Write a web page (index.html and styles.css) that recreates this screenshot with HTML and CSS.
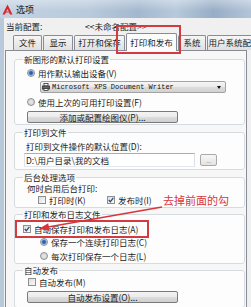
FILE: index.html
```html
<!DOCTYPE html>
<html lang="zh-CN">
<head>
    <meta charset="UTF-8">
    <meta name="viewport" content="width=device-width, initial-scale=1.0">
    <title>选项</title>
    <link rel="stylesheet" href="styles.css">
</head>
<body>
<div class="window">
    <div class="titlebar">
        <svg class="app-icon" width="11" height="11" viewBox="0 0 11 11">
            <path d="M0.5 10.5 L5.5 0.5 L10.5 10.5 L8 10.5 L5.5 5 L3 10.5 Z" fill="#d8262b"/>
            <path d="M4 8.6 L7 8.6 L6.5 7.4 L4.5 7.4 Z" fill="#d8262b"/>
        </svg>
        <span class="title">选项</span>
    </div>

    <div class="frame">
        <div class="profile">
            <span class="profile-label">当前配置:</span>
            <span class="profile-name">&lt;&lt;未命名配置&gt;&gt;</span>
        </div>

        <div class="tabs">
            <div class="tab t-file">文件</div>
            <div class="tab t-show">显示</div>
            <div class="tab t-open">打开和保存</div>
            <div class="tab t-plot active">打印和发布</div>
            <div class="tab t-sys">系统</div>
            <div class="tab t-user">用户系统配置</div>
        </div>

        <div class="panel">
            <fieldset class="group g-default">
                <legend>新图形的默认打印设置</legend>
                <div class="row radio-row first"><span class="radio on"></span>用作默认输出设备(V)</div>
                <div class="combo">
                    <svg class="printer" width="8" height="8" viewBox="0 0 8 8">
                        <rect x="2" y="0.5" width="4" height="2.5" fill="#fff" stroke="#333" stroke-width="0.8"/>
                        <rect x="0.5" y="3" width="7" height="3" fill="#666" stroke="#333" stroke-width="0.8"/>
                        <rect x="2" y="5.5" width="4" height="2" fill="#fff" stroke="#333" stroke-width="0.8"/>
                    </svg>
                    <span class="combo-text">Microsoft XPS Document Writer</span>
                    <span class="combo-arrow"></span>
                </div>
                <div class="row radio-row">
                    <span class="radio"></span>使用上次的可用打印设置(F)
                </div>
                <div class="btn wide">添加或配置绘图仪(P)...</div>
            </fieldset>

            <fieldset class="group g-file">
                <legend>打印到文件</legend>
                <div class="row file-label">打印到文件操作的默认位置(D):</div>
                <div class="file-row">
                    <div class="path">D:\用户目录\我的文档</div>
                    <div class="dots">....</div>
                </div>
            </fieldset>

            <fieldset class="group g-back">
                <legend>后台处理选项</legend>
                <div class="row when">何时启用后台打印:</div>
                <div class="row checks">
                    <span class="opt opt-plot"><span class="check"></span>打印时(K)</span>
                    <span class="opt opt-pub"><span class="check on"><svg width="6" height="6" viewBox="0 0 6 6"><path d="M0.8 3 L2.4 4.8 L5.3 0.9" stroke="#2f4677" stroke-width="1.3" fill="none"/></svg></span>发布时(I)</span>
                    <span class="callout">去掉前面的勾</span>
                </div>
            </fieldset>

            <fieldset class="group g-log">
                <legend>打印和发布日志文件</legend>
                <div class="row autosave"><span class="check on"><svg width="6" height="6" viewBox="0 0 6 6"><path d="M0.8 3 L2.4 4.8 L5.3 0.9" stroke="#2f4677" stroke-width="1.3" fill="none"/></svg></span>自动保存打印和发布日志(A)</div>
                <div class="row radio-row log-one"><span class="radio on"></span>保存一个连续打印日志(C)</div>
                <div class="row radio-row log-each"><span class="radio"></span>每次打印保存一个日志(L)</div>
            </fieldset>

            <fieldset class="group g-auto">
                <legend>自动发布</legend>
                <div class="row autopub"><span class="check"></span>自动发布(M)</div>
                <div class="btn wide">自动发布设置(O)...</div>
            </fieldset>
        </div>
    </div>

    <!-- annotations drawn over the screenshot -->
    <div class="mark mark-tab"></div>
    <div class="mark mark-log"></div>
    <svg class="arrow" width="251" height="307" viewBox="0 0 251 307">
        <line x1="162" y1="207" x2="48" y2="227" stroke="#d8353b" stroke-width="1.6"/>
        <polygon points="39,228.8 49.5,231 48.2,223.2" fill="#d8353b"/>
    </svg>
</div>
</body>
</html>
```

FILE: styles.css
```css
body {
    margin: 0;
    font-family: "Noto Sans CJK SC", "Noto Sans", sans-serif;
}
.window {
    position: relative;
    width: 251px;
    height: 307px;
    overflow: hidden;
    background: #f0f0f0;
    font-size: 8.5px;
    color: #1b1b1b;
}
.titlebar {
    height: 18px;
    display: flex;
    align-items: center;
    padding-left: 2px;
    background:
        linear-gradient(180deg, rgba(255,255,255,0.35), rgba(255,255,255,0) 60%),
        linear-gradient(90deg, #c2d2e3 0%, #b9cadc 35%, #a3b8cf 55%, #b7c9db 70%, #97adc6 85%, #b2c4d8 100%);
}
.app-icon {
    margin-right: 3px;
}
.title {
    font-size: 9px;
    color: #111;
}
.frame {
    border-left: 4px solid #b8c9db;
}
.profile {
    display: flex;
    height: 17px;
    line-height: 17px;
    padding-left: 2px;
}
.profile-label {
    width: 79px;
}

/* tabs */
.tabs {
    display: flex;
    align-items: flex-end;
    gap: 1px;
    height: 15px;
    padding-left: 9px;
}
.tab {
    box-sizing: border-box;
    height: 15px;
    line-height: 13px;
    text-align: center;
    white-space: nowrap;
    border: 1px solid #898c95;
    border-bottom: none;
    border-radius: 2px 2px 0 0;
    background: linear-gradient(#f6f6f6, #e0e0e0);
    flex-shrink: 0;
}
.t-file { width: 29px; }
.t-show { width: 30px; }
.t-open { width: 51px; }
.t-plot { width: 51px; }
.t-sys { width: 28px; }
.t-user { width: 54px; }
.tab.active {
    position: relative;
    z-index: 1;
    height: 18px;
    line-height: 16px;
    margin-bottom: -1px;
    background: #fcfcfc;
}

/* page */
.panel {
    box-sizing: border-box;
    width: 242px;
    height: 262px;
    margin-left: 1px;
    border: 1px solid #898c95;
    background: #f7f7f7;
}
.group {
    box-sizing: border-box;
    width: 231px;
    min-width: 0;
    margin: 2px 0 0 8px;
    padding: 0 8px 1px;
    border: 1px solid #d6dbe0;
    border-radius: 3px;
    background: #fdfdfd;
}
.group legend {
    padding: 0 1px;
    height: 10px;
    line-height: 10px;
    font-size: 8.5px;
}
.g-default { margin-top: 3px; }
.g-file { padding-bottom: 2px; }
.g-back { padding-bottom: 1px; }
.g-log { margin-top: 1px; }
.g-auto { margin-top: 1px; padding-bottom: 4px; }

.row {
    display: flex;
    align-items: center;
    height: 12px;
    line-height: 12px;
    white-space: nowrap;
}
.radio-row { margin-top: 3px; margin-left: 4px; }
.radio {
    box-sizing: border-box;
    width: 8px;
    height: 8px;
    margin-right: 3px;
    border: 1px solid #8e8f8f;
    border-radius: 50%;
    background: radial-gradient(circle, #e6e6e6, #d0d0d0);
    flex-shrink: 0;
}
.radio.on {
    background: radial-gradient(circle, #1f4f9c 0, #3c74c2 1.6px, #9fc0e6 2.6px, #eef2f7 3.2px);
}
.check {
    box-sizing: border-box;
    display: flex;
    align-items: center;
    justify-content: center;
    width: 8px;
    height: 8px;
    margin-right: 3px;
    border: 1px solid #8e8f8f;
    background: linear-gradient(135deg, #dcdcdc, #fbfbfb);
    flex-shrink: 0;
}

.combo {
    box-sizing: border-box;
    display: flex;
    align-items: center;
    width: 186px;
    height: 12px;
    margin: 2px 0 0 17px;
    padding-left: 1px;
    border: 1px solid #a3a3a3;
    border-radius: 2px;
    background: linear-gradient(#f6f6f6, #e9e9e9 50%, #dcdcdc 51%, #d2d2d2);
}
.printer {
    margin-right: 2px;
}
.combo-text {
    font-family: "Liberation Mono", monospace;
    font-size: 7px;
    line-height: 10px;
    color: #111;
}
.combo-arrow {
    margin-left: auto;
    margin-right: 4px;
    width: 0;
    height: 0;
    border-left: 2.5px solid transparent;
    border-right: 2.5px solid transparent;
    border-top: 3px solid #111;
}

.btn {
    box-sizing: border-box;
    display: flex;
    align-items: center;
    justify-content: center;
    height: 12px;
    line-height: 10px;
    margin: 3px 0 0 4px;
    border: 1px solid #7a7a7a;
    border-radius: 2px;
    background: linear-gradient(#f3f3f3, #ebebeb 50%, #dddddd 51%, #cfcfcf);
    white-space: nowrap;
}
.btn.wide { width: 151px; }

.file-label { margin-top: 3px; margin-left: 3px; }
.file-row {
    display: flex;
    align-items: center;
    height: 14px;
    margin: 1px 0 0 1px;
}
.path {
    box-sizing: border-box;
    display: flex;
    align-items: center;
    width: 171px;
    height: 14px;
    padding-left: 1px;
    border: 1px solid;
    border-color: #abadb3 #dbdfe6 #e3e9ef #e2e3ea;
    background: #fff;
    white-space: nowrap;
}
.dots {
    box-sizing: border-box;
    display: flex;
    align-items: center;
    justify-content: center;
    width: 17px;
    height: 12px;
    margin-left: 5px;
    border: 1px solid #a9a9a9;
    border-radius: 2px;
    background: linear-gradient(#f7f7f7, #e3e3e3);
    color: #9a9a9a;
    font-size: 6px;
    letter-spacing: -0.5px;
}

.when { margin-left: 4px; }
.checks { padding-left: 15px; }
.opt {
    display: flex;
    align-items: center;
}
.opt-plot { width: 69px; }
.opt-pub { width: 56px; }
.callout {
    font-size: 11px;
    line-height: 12px;
    color: #d8353b;
}

.autosave { margin-top: 4px; }
.log-one { margin-top: 1px; margin-left: 17px; }
.log-each { margin-top: 2px; margin-left: 17px; }
.autopub { margin-top: 1px; margin-left: 5px; }

/* red annotation marks */
.mark {
    position: absolute;
    box-sizing: border-box;
    border: 2px solid #d23b40;
}
.mark-tab {
    left: 116px;
    top: 25px;
    width: 65px;
    height: 29px;
    z-index: 2;
}
.mark-log {
    left: 15px;
    top: 220px;
    width: 134px;
    height: 18px;
}
.arrow {
    position: absolute;
    left: 0;
    top: 0;
    pointer-events: none;
}
```
